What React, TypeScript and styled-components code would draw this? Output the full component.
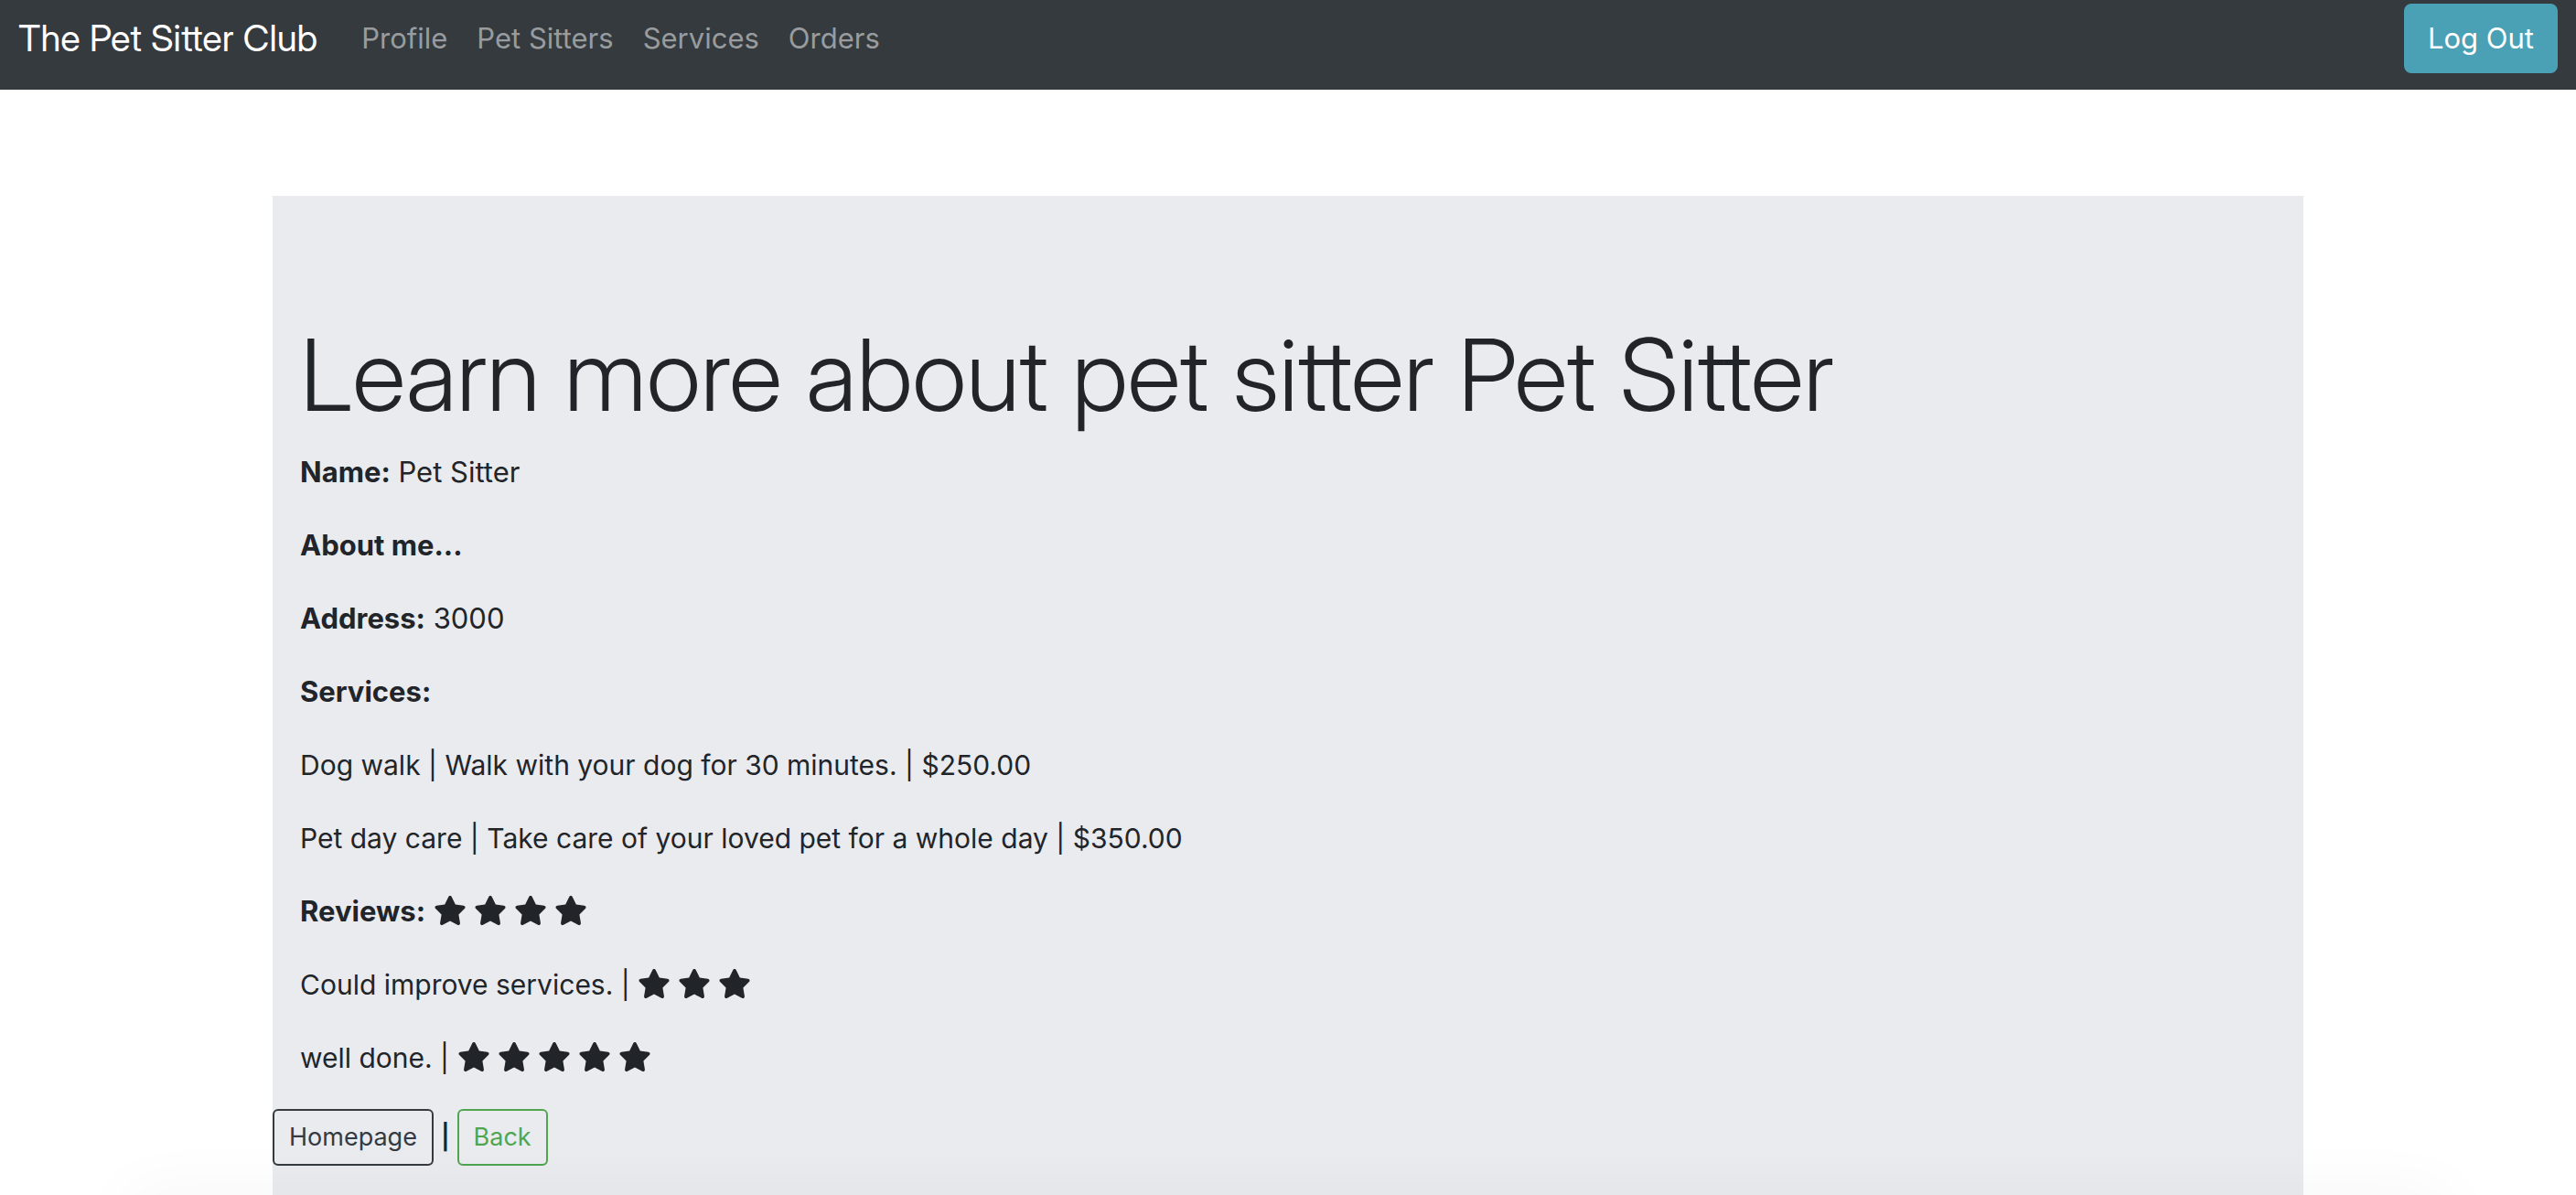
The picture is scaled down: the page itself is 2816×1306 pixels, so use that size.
import React from "react";
import styled, { createGlobalStyle } from "styled-components";
import { FaStar } from "react-icons/fa6";

const GlobalStyle = createGlobalStyle`
  *, *::before, *::after { box-sizing: border-box; }
  body {
    margin: 0;
    background: #fff;
    color: #212529;
    font-family: Inter, "Liberation Sans", sans-serif;
    font-size: 31px;
    font-variant-ligatures: none;
    line-height: 48px;
  }
`;

const Page = styled.div`
  display: flex;
  flex-direction: column;
  min-height: 100vh;
`;

const Navbar = styled.nav`
  display: flex;
  align-items: center;
  padding: 4px 20px 18px;
  background: #353a3e;
`;

const Brand = styled.a`
  margin-right: 32px;
  color: #fff;
  font-family: "Inter Display", Inter, sans-serif;
  font-size: 40px;
  line-height: 60px;
  text-decoration: none;
  white-space: nowrap;
`;

const NavList = styled.ul`
  display: flex;
  flex: 1;
  margin: 0;
  padding: 0;
  list-style: none;
`;

const NavLink = styled.a`
  display: block;
  padding: 0 16px;
  color: #999c9f;
  text-decoration: none;
`;

const LogOutButton = styled.button`
  padding: 12px 24px;
  border: 2px solid #4aa0b5;
  border-radius: 8px;
  background: #4aa0b5;
  color: #fff;
  font: inherit;
`;

const Panel = styled.main`
  flex: 1;
  width: calc(100% - 40px);
  max-width: 2220px;
  margin: 116px auto 0;
  padding: 128px 0 32px;
  background: #eaebef;
`;

const Details = styled.section`
  padding: 0 30px;
`;

const Title = styled.h1`
  margin: 0 0 16px;
  font-family: "Inter Display", Inter, sans-serif;
  font-size: 109px;
  font-weight: 300;
  line-height: 134px;
`;

const Line = styled.p`
  margin: 0 0 32px;
`;

const Entry = styled(Line)`
  font-size: 30px;
`;

const StarList = styled.span`
  display: inline-flex;
  gap: 8px;
  vertical-align: -4px;

  svg {
    width: 36px;
    height: 32px;
  }
`;

const Actions = styled.div`
  display: flex;
  align-items: center;
  gap: 8px;
`;

const Separator = styled.span`
  font-size: 27px;
  font-weight: 600;
`;

const ActionLink = styled.a<{ $color: string }>`
  padding: 8px 16px;
  border: 2px solid ${(p) => p.$color};
  border-radius: 6px;
  color: ${(p) => p.$color};
  font-size: 27px;
  line-height: 42px;
  text-decoration: none;
`;

const BottomShade = styled.div`
  position: fixed;
  right: 140px;
  bottom: -40px;
  left: 140px;
  height: 40px;
  box-shadow: 0 0 70px rgba(0, 0, 0, 0.05);
  pointer-events: none;
`;

const navItems = ["Profile", "Pet Sitters", "Services", "Orders"];

const services = [
  { name: "Dog walk", about: "Walk with your dog for 30 minutes.", price: "$250.00" },
  { name: "Pet day care", about: "Take care of your loved pet for a whole day", price: "$350.00" },
];

const reviews = [
  { text: "Could improve services.", stars: 3 },
  { text: "well done.", stars: 5 },
];

function Stars({ count }: { count: number }) {
  return (
    <StarList role="img" aria-label={`${count} stars`}>
      {Array.from({ length: count }, (_, i) => (
        <FaStar key={i} />
      ))}
    </StarList>
  );
}

export default function App() {
  return (
    <Page>
      <GlobalStyle />
      <Navbar>
        <Brand href="#">The Pet Sitter Club</Brand>
        <NavList>
          {navItems.map((item) => (
            <li key={item}>
              <NavLink href="#">{item}</NavLink>
            </li>
          ))}
        </NavList>
        <LogOutButton type="button">Log Out</LogOutButton>
      </Navbar>
      <Panel>
        <Details>
          <Title>Learn more about pet sitter Pet Sitter</Title>
          <Line><strong>Name:</strong> Pet Sitter</Line>
          <Line><strong>About me...</strong></Line>
          <Line><strong>Address:</strong> 3000</Line>
          <Line><strong>Services:</strong></Line>
          {services.map((s) => (
            <Entry key={s.name}>{`${s.name} | ${s.about} | ${s.price}`}</Entry>
          ))}
          <Line><strong>Reviews:</strong> <Stars count={4} /></Line>
          {reviews.map((r) => (
            <Entry key={r.text}>{`${r.text} | `}<Stars count={r.stars} /></Entry>
          ))}
        </Details>
        <Actions>
          <ActionLink href="#" $color="#343a40">Homepage</ActionLink>
          <Separator>|</Separator>
          <ActionLink href="#" $color="#4fa64f">Back</ActionLink>
        </Actions>
      </Panel>
      <BottomShade />
    </Page>
  );
}
